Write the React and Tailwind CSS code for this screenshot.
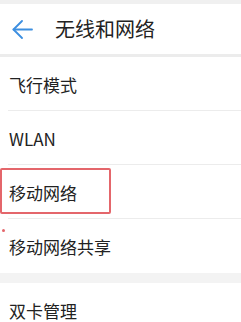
import React from "react";

const font = { fontFamily: '"Noto Sans CJK SC", "Noto Sans", sans-serif' };

function Row({ label, last }) {
  return (
    <div className="h-[54px] flex items-center pl-[9px] relative">
      <span className="text-[17px] leading-none text-[#222]">{label}</span>
      {!last && <div className="absolute left-[8px] right-0 bottom-0 h-px bg-[#ececec]" />}
    </div>
  );
}

export default function App() {
  return (
    <div className="w-[241px] h-[322px] overflow-hidden bg-white relative" style={font}>
      <div className="h-[4px] bg-[#f0f0f0]" />
      <div className="h-[50px] flex items-center bg-white">
        <svg className="ml-[12px]" width="21" height="19" viewBox="0 0 21 19" fill="none" stroke="#3d8fe0" strokeWidth="1.8" strokeLinecap="round" strokeLinejoin="round">
          <path d="M1.5 9.5H20" />
          <path d="M10 1L1.5 9.5L10 18" />
        </svg>
        <span className="ml-[22px] text-[20px] leading-none text-[#222]">无线和网络</span>
      </div>
      <div className="h-[3px] bg-[#ececec]" />
      <Row label="飞行模式" />
      <Row label="WLAN" />
      <Row label="移动网络" />
      <Row label="移动网络共享" last />
      <div className="h-[10px] bg-[#f3f3f3]" />
      <Row label="双卡管理" last />
      <div className="absolute left-0 top-[168px] w-[111px] h-[46px] border-2 border-[#e4666b] rounded-[2px]" />
      <div className="absolute left-[2px] top-[229px] w-[3px] h-[3px] rounded-full bg-[#e4666b]" />
    </div>
  );
}
